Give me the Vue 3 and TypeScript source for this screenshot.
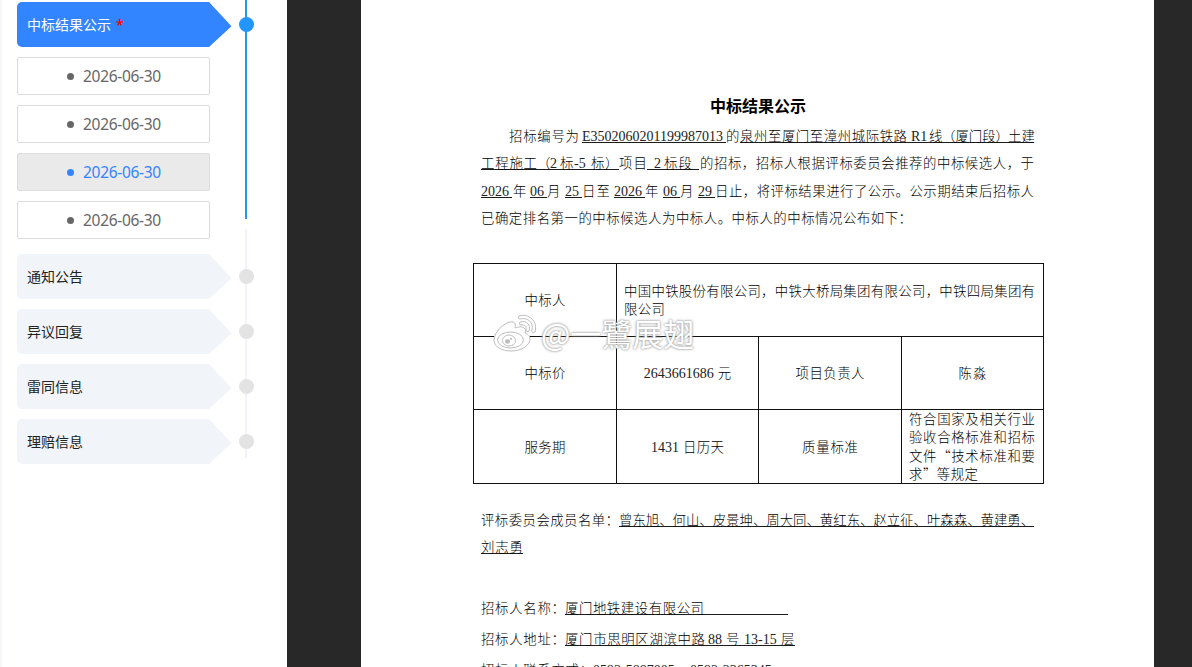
<script setup lang="ts">
interface Segment {
  text: string
  width: number
  under?: boolean
}

const dates = [
  { label: '2026-06-30', active: false },
  { label: '2026-06-30', active: false },
  { label: '2026-06-30', active: true },
  { label: '2026-06-30', active: false },
]
const sections = ['通知公告', '异议回复', '雷同信息', '理赔信息']

const s = (text: string, width: number, under = false): Segment => ({ text, width, under })
const isAscii = (text: string) => /^[\w-]+$/.test(text)

const intro: Segment[][] = [
  [
    s('', 28), s('招标编号为', 70), s('', 3), s('E3502060201199987013', 140, true), s('', 4, true), s('的', 14),
    s('泉州至厦门至漳州城际铁路', 167, true), s('', 4, true), s('R1', 14, true), s('', 4, true),
    s('线', 13, true), s('（厦门段）', 66, true), s('土建', 26, true),
  ],
  [
    s('工程施工', 56, true), s('（', 13, true), s('2', 8, true), s('', 2, true), s('标', 14, true), s('-5', 14, true),
    s('', 3, true), s('标', 14, true), s('）', 14, true), s('项目', 28), s('', 7, true), s('2', 8, true),
    s('', 2, true), s('标段', 28, true), s('', 7, true), s('', 1), s('的招标，招标人根据评标委员会推荐的中标候选人，于', 334),
  ],
  [
    s('2026', 28, true), s('', 3, true), s('', 1), s('年', 16), s('', 1), s('06', 14, true), s('', 3, true), s('月', 17), s('', 1),
    s('25', 14, true), s('', 3, true), s('日至', 28), s('', 4), s('2026', 28, true), s('', 3, true), s('年', 17), s('', 1),
    s('06', 14, true), s('', 3, true), s('月', 17), s('', 1), s('29', 14, true), s('', 3, true),
    s('日止，将评标结果进行了公示。公示期结束后招标人', 319),
  ],
  [s('已确定排名第一的中标候选人为中标人。中标人的中标情况公布如下：', 431)],
]

const members: Segment[][] = [
  [s('评标委员会成员名单：', 138), s('曾东旭、何山、皮景坤、周大同、黄红东、赵立征、叶森森、黄建勇、', 415, true)],
  [s('刘志勇', 42, true)],
]

const contact: Segment[][] = [
  [s('招标人名称：', 84), s('厦门地铁建设有限公司', 139, true), s('', 84, true)],
  [
    s('招标人地址：', 84), s('厦门市思明区湖滨中路', 140, true), s('', 3, true), s('88', 14, true), s('', 4, true),
    s('号', 14, true), s('', 4, true), s('13-15', 34, true), s('', 3, true), s('层', 14, true),
  ],
  [s('招标人联系方式：', 112), s('0592-5887005', 84), s('、', 13), s('0592-2365345', 84)],
]
</script>

<template>
  <div class="page">
    <aside class="side">
      <nav class="menu">
        <div class="tab current"><span>中标结果公示</span><b class="star">*</b></div>
        <div class="dates">
          <div v-for="(d, i) in dates" :key="i" class="date" :class="{ active: d.active }">
            <i class="bullet"></i><span>{{ d.label }}</span>
          </div>
        </div>
        <div v-for="name in sections" :key="name" class="tab"><span>{{ name }}</span></div>
      </nav>
      <div class="rail">
        <div class="line blue"></div>
        <div class="line gray"></div>
        <i class="dot on"></i>
        <i v-for="name in sections" :key="name" class="dot"></i>
      </div>
    </aside>
    <main class="viewer">
      <article class="paper">
        <h1>中标结果公示</h1>
        <section class="intro">
          <p v-for="(row, i) in intro" :key="i" class="row">
            <span v-for="(g, j) in row" :key="j" class="seg" :class="{ under: g.under, ascii: isAscii(g.text) }" :style="{ width: g.width + 'px' }">{{ g.text }}</span>
          </p>
        </section>
        <div class="award">
          <div class="cell"><span class="w3">中标人</span></div>
          <div class="cell wide">
            <span class="full">中国中铁股份有限公司，中铁大桥局集团有限公司，中铁四局集团有</span>
            <span class="w3">限公司</span>
          </div>
          <div class="cell"><span class="w3">中标价</span></div>
          <div class="cell"><div class="mixed"><b class="num">2643661686</b><span>元</span></div></div>
          <div class="cell"><span class="w5">项目负责人</span></div>
          <div class="cell"><span class="w2">陈淼</span></div>
          <div class="cell"><span class="w3">服务期</span></div>
          <div class="cell"><div class="mixed"><b class="num">1431</b><span class="w3">日历天</span></div></div>
          <div class="cell"><span class="w4">质量标准</span></div>
          <div class="cell quality">
            <span class="full">符合国家及相关行业</span>
            <span class="full">验收合格标准和招标</span>
            <span class="full">文件“技术标准和要</span>
            <span class="w5">求”等规定</span>
          </div>
        </div>
        <section class="members">
          <p v-for="(row, i) in members" :key="i" class="row">
            <span v-for="(g, j) in row" :key="j" class="seg" :class="{ under: g.under, ascii: isAscii(g.text) }" :style="{ width: g.width + 'px' }">{{ g.text }}</span>
          </p>
        </section>
        <section class="contact">
          <p v-for="(row, i) in contact" :key="i" class="row">
            <span v-for="(g, j) in row" :key="j" class="seg" :class="{ under: g.under, ascii: isAscii(g.text) }" :style="{ width: g.width + 'px' }">{{ g.text }}</span>
          </p>
        </section>
        <div class="mark">
          <svg width="49" height="40" viewBox="0 0 49 40">
            <g fill="#fff" stroke="#bdbdbd" stroke-width="1">
              <path d="M18 9C12 10 2 19 2 27c0 7 8 11 17 11 11 0 19-6 19-12 0-4-3-5-5-6 1-2 1-4-1-5-2-2-6-1-9 0 1-4 0-7-5-6z" />
              <ellipse cx="18.500" cy="27" rx="13" ry="8" />
              <ellipse cx="17" cy="27.500" rx="6.500" ry="5.500" />
              <path d="M28 9c7-2 11 3 9 9-1 1-3 1-3-1 1-4-2-6-5-5-2 0-2-2-1-3z" />
              <path d="M27 3c10-3 19 5 16 16-1 1-4 1-3-2 2-8-5-13-12-11-2 0-2-2-1-3z" />
            </g>
            <ellipse cx="15.500" cy="28.500" rx="2.600" ry="2.200" fill="#bdbdbd" />
            <circle cx="19" cy="26" r="1" fill="#bdbdbd" />
          </svg>
          <span>@一鷺展翅</span>
        </div>
      </article>
    </main>
  </div>
</template>

<style>
body {
  margin: 0;
  overflow: hidden;
}
</style>

<style scoped>
.page {
  display: flex;
  width: 1192px;
  height: 667px;
  overflow: hidden;
  background: #fff;
  font-family: "Noto Sans CJK SC", sans-serif;
}
.side {
  box-sizing: border-box;
  width: 287px;
  flex: none;
  display: flex;
  border-left: 2px solid #f5f7fb;
  padding: 2px 0 0 15px;
}
.menu {
  width: 215px;
}
.tab {
  position: relative;
  box-sizing: border-box;
  width: 192px;
  height: 45px;
  margin-bottom: 10px;
  padding-left: 10px;
  border-radius: 5px 0 0 5px;
  background: #f1f5fa;
  color: #222;
  font-size: 14px;
  line-height: 45px;
}
.tab::after {
  content: "";
  position: absolute;
  left: 191px;
  top: 0;
  width: 23.500px;
  height: 45px;
  background: inherit;
  clip-path: polygon(0 0, 1px 0, 100% 54%, 1px 100%, 0 100%);
}
.tab.current {
  background: #3385ff;
  color: #fff;
}
.star {
  margin-left: 5px;
  color: #f00;
  font: 600 14px "Noto Sans", sans-serif;
}
.dates {
  display: grid;
  gap: 10px;
  margin-bottom: 15px;
}
.date {
  box-sizing: border-box;
  width: 193px;
  height: 38px;
  display: flex;
  align-items: center;
  padding: 0 0 1px 49px;
  border: 1px solid #dcdcdc;
  border-radius: 2px;
  color: #666;
  font: 15.500px/20px "Noto Sans", sans-serif;
  letter-spacing: -0.300px;
}
.date.active {
  background: #eaeaea;
  color: #3385ff;
}
.bullet {
  width: 7px;
  height: 7px;
  margin: 2px 9px 0 0;
  border-radius: 50%;
  background: currentColor;
}
.rail {
  position: relative;
  width: 15px;
  margin: -2px 0 0 7px;
}
.line {
  width: 2px;
  margin-left: 6px;
}
.blue {
  height: 219px;
  background: #2395ff;
}
.gray {
  height: 229px;
  margin-top: 10px;
  background: #f2f3fa;
}
.dot {
  position: absolute;
  left: 0;
  width: 15px;
  height: 15px;
  border-radius: 50%;
  background: #e3e3e3;
}
.dot.on {
  top: 17px;
  background: #2395ff;
}
.dot:nth-of-type(2) { top: 269px; }
.dot:nth-of-type(3) { top: 324px; }
.dot:nth-of-type(4) { top: 379px; }
.dot:nth-of-type(5) { top: 434px; }
.viewer {
  flex: 1;
  padding-left: 74px;
  background: #282828;
}
.paper {
  position: relative;
  box-sizing: border-box;
  width: 793px;
  height: 700px;
  padding: 95px 0 0 112px;
  background: #fff;
  color: #000;
  font-family: "Noto Sans CJK SC", serif;
  font-size: 13.400px;
  font-weight: 300;
}
h1 {
  margin: 0 0 8px;
  padding-left: 237px;
  color: #000;
  font-size: 16px;
  font-weight: 700;
  line-height: 20px;
}
section {
  margin-left: 8px;
}
.row {
  display: flex;
  height: 27.300px;
  margin: 0;
  align-items: flex-start;
}
.seg {
  flex: none;
  box-sizing: border-box;
  height: 20px;
  line-height: 24px;
  white-space: nowrap;
  text-align: justify;
  text-align-last: justify;
}
.ascii,
.num {
  color: #222;
  font-family: "Liberation Serif", serif;
  font-size: 14px;
  font-weight: 400;
}
.ascii {
  line-height: 27px;
}
.num {
  margin-top: 2px;
}
.under {
  border-bottom: 1px solid #1c1c1c;
}
.award {
  display: grid;
  grid-template-columns: 143px 142px 143px 142px;
  grid-template-rows: 73px 73px 74px;
  width: 571px;
  margin-top: 31px;
  box-sizing: border-box;
  border-left: 1px solid #111;
  border-top: 1px solid #111;
}
.cell {
  display: flex;
  flex-direction: column;
  align-items: center;
  justify-content: center;
  box-sizing: border-box;
  padding-bottom: 2px;
  border-right: 1px solid #111;
  border-bottom: 1px solid #111;
  line-height: 18.300px;
}
.cell span {
  white-space: nowrap;
  text-align: justify;
  text-align-last: justify;
}
.mixed {
  display: flex;
  gap: 4px;
  height: 18px;
}
.wide {
  grid-column: span 3;
}
.wide,
.quality {
  align-items: flex-start;
  padding: 0 8px 2px 7px;
}
.cell .full { width: 100%; }
.w2 { width: 28px; }
.w3 { width: 41px; }
.w4 { width: 56px; }
.w5 { width: 69px; }
.members {
  margin-top: 23px;
}
.contact {
  margin-top: 33px;
}
.contact .row {
  height: 31px;
}
.mark {
  position: absolute;
  left: 131px;
  top: 313px;
  display: flex;
  color: #fff;
  font: 400 31px/40px "Noto Sans CJK SC", sans-serif;
  text-shadow: 0 0 2px #999, 0 0 3px #aaa;
}
</style>
